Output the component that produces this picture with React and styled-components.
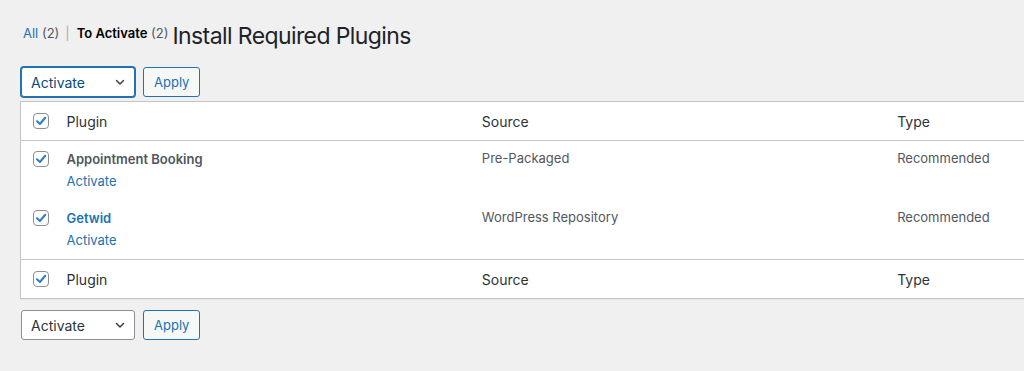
import React from 'react';
import styled, { createGlobalStyle } from 'styled-components';

const GlobalStyle = createGlobalStyle`
  body {
    margin: 0;
    background: #f0f0f1;
    overflow: hidden;
    font-family: Inter, "Liberation Sans", sans-serif;
    color: #3c434a;
    font-size: 13px;
  }
`

const plugins = [
  { name: 'Appointment Booking', link: false, source: 'Pre-Packaged', type: 'Recommended' },
  { name: 'Getwid', link: true, source: 'WordPress Repository', type: 'Recommended' },
]

function Chevron() {
  return (
    <svg width="12" height="12" viewBox="0 0 12 12" fill="none">
      <path d="M2.5 4.5 L6 8 L9.5 4.5" stroke="#3c434a" strokeWidth="1.5" strokeLinecap="round" strokeLinejoin="round" />
    </svg>
  )
}

function Check() {
  return (
    <Box>
      <svg width="14" height="14" viewBox="0 0 14 14" fill="none">
        <path d="M3 7.3 L5.9 10 L11.2 3.8" stroke="#3582c4" strokeWidth="2.2" strokeLinecap="round" strokeLinejoin="round" />
      </svg>
    </Box>
  )
}

function BulkActions({ focused }) {
  return (
    <TableNav>
      <Select $focused={focused}>
        <span>Activate</span>
        <Chevron />
      </Select>
      <Button>Apply</Button>
    </TableNav>
  )
}

function HeadRow() {
  return (
    <tr>
      <CheckHead><Check /></CheckHead>
      <Th>Plugin</Th>
      <Th>Source</Th>
      <Th>Type</Th>
    </tr>
  )
}

function App() {
  return (
    <>
      <GlobalStyle />
      <Wrap>
        <TitleLine>
          <SubSub>
            <li><FilterLink href="#">All</FilterLink> <Count>(2)</Count></li>
            <Sep>|</Sep>
            <li><Current>To Activate</Current> <Count>(2)</Count></li>
          </SubSub>
          <Title>Install Required Plugins</Title>
        </TitleLine>

        <TopNav>
          <BulkActions focused />
        </TopNav>

        <Table>
          <colgroup>
            <col style={{ width: 36 }} />
            <col style={{ width: 415 }} />
            <col style={{ width: 415 }} />
            <col style={{ width: 415 }} />
          </colgroup>
          <thead><HeadRow /></thead>
          <tbody>
            {plugins.map((p) => (
              <tr key={p.name}>
                <CheckCell><Check /></CheckCell>
                <Td>
                  <Name $link={p.link}>{p.name}</Name>
                  <RowAction href="#">Activate</RowAction>
                </Td>
                <Td>{p.source}</Td>
                <Td>{p.type}</Td>
              </tr>
            ))}
          </tbody>
          <tfoot><HeadRow /></tfoot>
        </Table>

        <BottomNav>
          <BulkActions />
        </BottomNav>
      </Wrap>
    </>
  )
}

const Wrap = styled.div`
  padding: 0 0 0 20px;
`

const TitleLine = styled.div`
  display: flex;
  align-items: flex-start;
  padding-top: 21px;
  height: 46px;
`

const SubSub = styled.ul`
  display: flex;
  align-items: baseline;
  list-style: none;
  margin: 4px 0 0 3px;
  padding: 0;
  font-size: 13px;
  line-height: 16px;
  color: #646970;

  li { white-space: nowrap; }
`

const FilterLink = styled.a`
  color: #2271b1;
  text-decoration: none;
`

const Current = styled.span`
  color: #000;
  font-weight: 600;
`

const Count = styled.span`
  color: #50575e;
`

const Sep = styled.li`
  margin: 0 7px 0 6px;
  color: #a7aaad;
`

const Title = styled.h1`
  margin: 0 0 0 4px;
  font-size: 23px;
  font-weight: 400;
  letter-spacing: -0.6px;
  color: #1d2327;
  line-height: 30px;
`

const TableNav = styled.div`
  display: flex;
  gap: 8px;
  align-items: center;
  height: 30px;
`

const TopNav = styled.div``

const BottomNav = styled.div`
  margin-top: 11px;
`

const Select = styled.div`
  box-sizing: border-box;
  width: 114px;
  height: 30px;
  margin-left: 1px;
  display: flex;
  align-items: center;
  justify-content: space-between;
  padding: 0 8px 0 9px;
  background: #fff;
  border: 1px solid ${(p) => (p.$focused ? '#2271b1' : '#8c8f94')};
  box-shadow: ${(p) => (p.$focused ? '0 0 0 1px #2271b1' : 'none')};
  border-radius: 3px;
  font-size: 14px;
  color: ${(p) => (p.$focused ? '#0a4b78' : '#2c3338')};
`

const Button = styled.button`
  box-sizing: border-box;
  height: 30px;
  width: 57px;
  padding: 0 10px;
  border: 1px solid #2271b1;
  border-radius: 3px;
  background: #f6f7f7;
  color: #2271b1;
  font-family: inherit;
  font-size: 13px;
`

const Table = styled.table`
  margin-top: 4px;
  width: 1283px;
  table-layout: fixed;
  border-collapse: collapse;
  border: 1px solid #c3c4c7;
  background: #fff;
  box-shadow: 0 1px 1px rgba(0, 0, 0, 0.04);

  thead tr { border-bottom: 1px solid #c3c4c7; }
  tfoot tr { border-top: 1px solid #c3c4c7; }
`

const Th = styled.th`
  text-align: left;
  font-weight: 400;
  font-size: 14px;
  color: #2c3338;
  padding: 0 10px;
  height: 38px;
`

const CheckHead = styled.th`
  padding: 0 0 0 12px;
  height: 38px;
  text-align: left;
`

const CheckCell = styled.td`
  padding: 10px 0 0 12px;
  vertical-align: top;
`

const Td = styled.td`
  vertical-align: top;
  padding: 9px 10px 0;
  height: 50px;
  font-size: 13px;
  color: #50575e;
`

const Name = styled.div`
  font-weight: 600;
  color: ${(p) => (p.$link ? '#2271b1' : '#50575e')};
  line-height: 18px;
`

const RowAction = styled.a`
  display: block;
  margin-top: 4px;
  color: #2271b1;
  text-decoration: none;
  line-height: 18px;
`

const Box = styled.span`
  box-sizing: border-box;
  display: flex;
  align-items: center;
  justify-content: center;
  width: 16px;
  height: 16px;
  border: 1px solid #8c8f94;
  border-radius: 4px;
  background: #fff;
`

export default App
